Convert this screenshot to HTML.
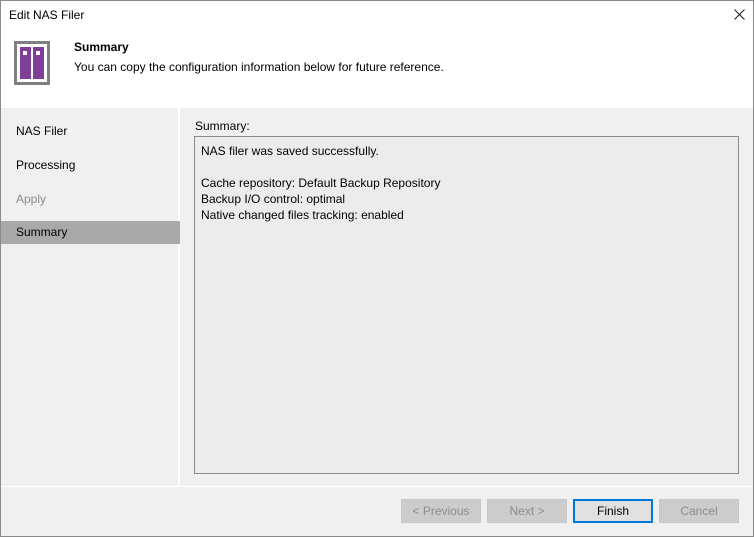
<!DOCTYPE html>
<html><head><style>
*{margin:0;padding:0;box-sizing:border-box}
body{width:754px;height:537px;font-family:"Liberation Sans",sans-serif;font-size:12px;color:#000;background:#f0f0f0;position:relative;overflow:hidden}
.frame{position:absolute;left:0;top:0;width:754px;height:537px;border:1px solid #8a8a8a;z-index:9}
.hdr{position:absolute;left:0;top:0;width:754px;height:108px;background:#fff}
.abs{position:absolute}
.left{position:absolute;left:0;top:108px;width:180px;height:378px;background:#f0f0f0;border-right:2px solid #fff}
.item{position:absolute;left:0;width:180px;height:23px;padding-left:16px;line-height:23px}
.btn{position:absolute;top:499px;height:24px;width:80px;text-align:center;line-height:22px;border:1px solid #c8c8c8;background:#cccccc;color:#8c8c8c}
</style></head><body>
<div class="frame"></div>
<div class="hdr">
<div class="abs" style="left:9px;top:8px">Edit NAS Filer</div>
<svg class="abs" style="left:734px;top:9px" width="11" height="11"><path d="M0.5 0.5L10.5 10.5M10.5 0.5L0.5 10.5" stroke="#222" stroke-width="1.1"/></svg>
<div class="abs" style="left:14px;top:41px;width:36px;height:44px;background:#808080"></div>
<div class="abs" style="left:17px;top:44px;width:30px;height:38px;background:#fff"></div>
<div class="abs" style="left:20px;top:47px;width:11px;height:32px;background:#7f3f98"></div>
<div class="abs" style="left:33px;top:47px;width:11px;height:32px;background:#7f3f98"></div>
<div class="abs" style="left:23px;top:51px;width:4px;height:4px;background:#fff"></div>
<div class="abs" style="left:36px;top:51px;width:4px;height:4px;background:#fff"></div>
<div class="abs" style="left:74px;top:40px;font-weight:bold">Summary</div>
<div class="abs" style="left:74px;top:60px">You can copy the configuration information below for future reference.</div>
</div>
<div class="left">
<div class="item" style="top:12px">NAS Filer</div>
<div class="item" style="top:46px">Processing</div>
<div class="item" style="top:80px;color:#8c8c8c">Apply</div>
<div class="item" style="top:113px;background:#a9a9a9">Summary</div>
</div>
<div class="abs" style="left:195px;top:119px">Summary:</div>
<div class="abs" style="left:194px;top:136px;width:545px;height:338px;border:1px solid #8a8a8a;background:#ececec;padding:6px;line-height:16px">
NAS filer was saved successfully.<br><br>Cache repository: Default Backup Repository<br>Backup I/O control: optimal<br>Native changed files tracking: enabled
</div>
<div class="abs" style="left:0;top:486px;width:754px;height:1px;background:#fff"></div>
<div class="btn" style="left:401px">&lt; Previous</div>
<div class="btn" style="left:487px">Next &gt;</div>
<div class="btn" style="left:573px;border:2px solid #0078d7;background:#e1e1e1;color:#000;line-height:20px">Finish</div>
<div class="btn" style="left:659px">Cancel</div>
</body></html>
